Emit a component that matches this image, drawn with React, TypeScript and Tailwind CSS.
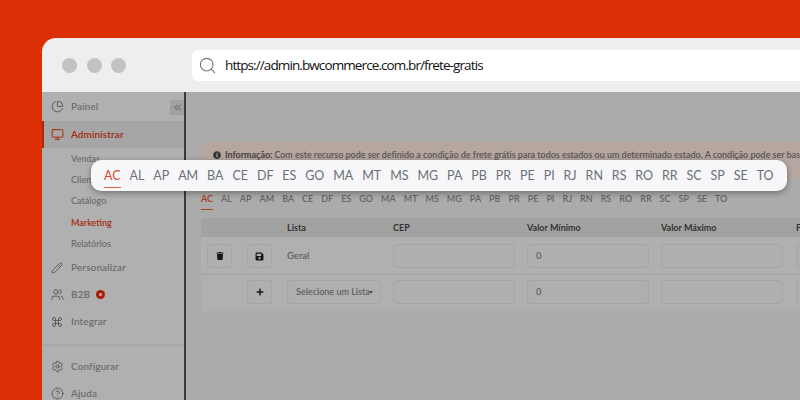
import React from "react";
import { ChartPie, Monitor, Pencil, Users, Command, Settings, CircleHelp, ChevronsLeft, Search } from "lucide-react";
import { FaTrash, FaSave, FaPlus, FaInfoCircle, FaCaretDown } from "react-icons/fa";

const states = ["AC","AL","AP","AM","BA","CE","DF","ES","GO","MA","MT","MS","MG","PA","PB","PR","PE","PI","RJ","RN","RS","RO","RR","SC","SP","SE","TO"];

function NavRow({ icon, label, active, badge, className = "" }: { icon: React.ReactNode; label: string; active?: boolean; badge?: boolean; className?: string }) {
  return (
    <div className={`flex h-[27px] shrink-0 items-center text-[10px] font-semibold tracking-[0.1px] ${active ? "border-l-2 border-[#a32a10] bg-[#a6a6a6] pl-[4px] font-bold text-[#a32a10]" : "pl-[6px] text-[#6e6e6e]"} ${className}`}>
      <span className={`flex w-[18px] justify-center ${active ? "text-[#a32a10]" : "text-[#4d4d4d]"}`}>{icon}</span>
      <span className="ml-[5px]">{label}</span>
      {badge && <span className="ml-[6px] flex h-[9px] w-[9px] items-center justify-center rounded-full bg-[#a81d06]"><span className="h-[3px] w-[3px] rounded-full bg-[#c9b0a8]" /></span>}
    </div>
  );
}

function SubRow({ label, active }: { label: string; active?: boolean }) {
  return <div className={`flex h-[21.3px] items-center pl-[29px] text-[9px] font-semibold ${active ? "font-bold text-[#a32a10]" : "text-[#6e6e6e]"}`}>{label}</div>;
}

function Field({ value, className = "", children }: { value?: string; className?: string; children?: React.ReactNode }) {
  return <div className={`flex h-[24px] items-center rounded-[3px] border border-[#a5a5a5] bg-[#afafaf] pl-[8px] text-[9.5px] font-semibold text-[#5f5f5f] ${className}`}>{value}{children}</div>;
}

function IconButton({ children }: { children: React.ReactNode }) {
  return <div className="flex h-[24px] w-[25px] items-center justify-center rounded-[3px] border border-[#a5a5a5] bg-[#afafaf] text-[#161616]">{children}</div>;
}

const rowGrid = "grid grid-cols-[6px_25px_15px_25px_15px_94px_12px_122px_12px_122px_12px_122px_13px_40px] items-center";

export default function App() {
  return (
    <div className="h-[400px] w-[800px] overflow-hidden bg-[#dc2f05] pl-[42px] pt-[38px] font-['Lato',sans-serif]">
      <div className="relative flex h-[362px] w-[758px] flex-col overflow-hidden rounded-tl-[14px]">
        <header className="flex h-[54px] shrink-0 items-center bg-[#eeeeee] pl-[20px]">
          <div className="flex gap-[9.5px]">
            <span className="h-[15px] w-[15px] rounded-full bg-[#c2c2c0]" />
            <span className="h-[15px] w-[15px] rounded-full bg-[#c2c2c0]" />
            <span className="h-[15px] w-[15px] rounded-full bg-[#c2c2c0]" />
          </div>
          <div className="ml-[66px] flex h-[31px] flex-1 items-center rounded-l-[6px] bg-white pl-[6px] font-['Open_Sans',sans-serif] text-[13.5px] tracking-[-0.9px] text-[#111111]">
            <Search size={19} strokeWidth={1.4} className="text-[#777777]" />
            <span className="ml-[8px]">https://admin.bwcommerce.com.br/frete-gratis</span>
          </div>
        </header>

        <div className="flex min-h-0 flex-1">
          <aside className="relative flex w-[144px] shrink-0 flex-col border-r-2 border-[#3a3a3a] bg-[#b0b0b0]">
            <NavRow icon={<ChartPie size={13} strokeWidth={1.6} />} label="Painel" className="h-[29px]" />
            <NavRow icon={<Monitor size={13} strokeWidth={1.8} />} label="Administrar" active />
            <div>
              <SubRow label="Vendas" />
              <SubRow label="Clientes" />
              <SubRow label="Catálogo" />
              <SubRow label="Marketing" active />
              <SubRow label="Relatórios" />
            </div>
            <NavRow icon={<Pencil size={12} strokeWidth={1.6} />} label="Personalizar" />
            <NavRow icon={<Users size={13} strokeWidth={1.6} />} label="B2B" badge />
            <NavRow icon={<Command size={12} strokeWidth={1.6} />} label="Integrar" />
            <div className="mt-[9px] mb-[7px] h-[2px] shrink-0 bg-[#a8a8a8]" />
            <NavRow icon={<Settings size={13} strokeWidth={1.6} />} label="Configurar" />
            <NavRow icon={<CircleHelp size={13} strokeWidth={1.6} />} label="Ajuda" />
            <div className="absolute right-0 top-[8px] flex h-[15px] w-[14px] items-center justify-center bg-[#a0a0a0] text-[#3f3f3f]">
              <ChevronsLeft size={11} strokeWidth={1.6} />
            </div>
          </aside>

          <main className="min-w-0 flex-1 overflow-hidden bg-[#ababab] pl-[15px] pt-[50px]">
            <div className="flex h-[38px] w-[640px] items-start whitespace-nowrap bg-[#b5a69f] pl-[12px] pt-[6px] text-[9px] font-semibold tracking-[-0.03px] text-[#555555]">
              <FaInfoCircle size={8} className="mt-[3px] text-[#333333]" />
              <span className="ml-[4px] font-bold text-[#444444]">Informação:</span>
              <span className="ml-[2px]">Com este recurso pode ser definido a condição de frete grátis para todos estados ou um determinado estado. A condição pode ser baseada</span>
            </div>

            <div className="mt-[12px] flex h-[18px] gap-[8px] text-[9px] font-semibold text-[#666666]">
              {states.map((s, i) => (
                <span key={s} className={i === 0 ? "h-[18px] border-b border-[#b5402a] text-[#a8351f]" : ""}>{s}</span>
              ))}
            </div>

            <div className="mt-[8px] w-[640px] bg-[#b0b0b0]">
              <div className={`${rowGrid} h-[19px] rounded-t-[3px] bg-[#a2a2a2] text-[9px] font-bold text-[#333333]`}>
                <span className="col-start-6">Lista</span>
                <span className="col-start-8">CEP</span>
                <span className="col-start-10">Valor Mínimo</span>
                <span className="col-start-12">Valor Máximo</span>
                <span className="col-start-14">Frete</span>
              </div>
              <div className={`${rowGrid} h-[38px] border-b-2 border-[#a7a7a7] pt-[2px]`}>
                <div className="col-start-2"><IconButton><FaTrash size={8} /></IconButton></div>
                <div className="col-start-4"><IconButton><FaSave size={9} /></IconButton></div>
                <span className="col-start-6 text-[9.5px] font-semibold text-[#5f5f5f]">Geral</span>
                <div className="col-start-8"><Field /></div>
                <div className="col-start-10"><Field value="0" /></div>
                <div className="col-start-12"><Field /></div>
                <div className="col-start-14"><Field /></div>
              </div>
              <div className={`${rowGrid} h-[36px] pb-[2px]`}>
                <div className="col-start-4"><IconButton><FaPlus size={8} /></IconButton></div>
                <div className="col-start-6">
                  <Field className="whitespace-nowrap text-[9px]">
                    <span>Selecione um Lista</span>
                    <FaCaretDown size={6} className="ml-[-2px] text-[#333333]" />
                  </Field>
                </div>
                <div className="col-start-8"><Field /></div>
                <div className="col-start-10"><Field value="0" /></div>
                <div className="col-start-12"><Field /></div>
                <div className="col-start-14"><Field /></div>
              </div>
            </div>
          </main>
        </div>

        <div className="absolute left-[49px] top-[122px] flex h-[31px] w-[696px] items-center justify-between rounded-[10px] bg-[#f7f7f9] px-[13px] pt-[1px] text-[12.5px] text-[#6a6f78] shadow-[0_2px_6px_rgba(0,0,0,0.35)]">
          {states.map((s, i) => (
            <span key={s} className={i === 0 ? "relative text-[#d9472b] after:absolute after:left-0 after:right-0 after:top-[20px] after:h-[1.5px] after:bg-[#e8664d] after:content-['']" : ""}>{s}</span>
          ))}
        </div>
      </div>
    </div>
  );
}
